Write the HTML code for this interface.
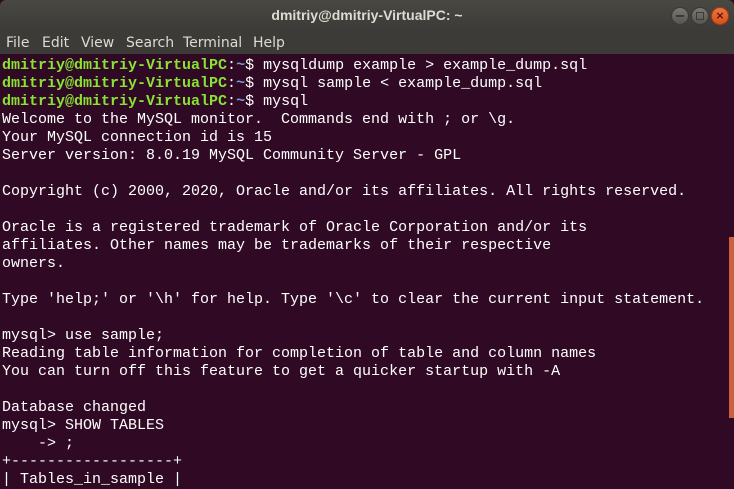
<!DOCTYPE html>
<html><head><style>
body{margin:0;width:734px;height:488px;overflow:hidden;background:#300a24;}
.title{position:absolute;left:0;top:0;width:734px;height:30px;background:linear-gradient(#4a4843,#3c3b37);border-radius:6px 6px 0 0;color:#dfdbd2;font:bold 14px "Liberation Sans",sans-serif;text-align:center;line-height:30px;}
.menu{position:absolute;left:0;top:30px;width:734px;height:24px;background:#3c3b37;color:#dfdbd2;font:14px "DejaVu Sans","Liberation Sans",sans-serif;line-height:27px;}
.menu span{position:absolute;top:0}
.term{position:absolute;left:0;top:54px;width:734px;height:434px;background:#300a24;}
pre{margin:0;position:absolute;left:2px;top:3px;font:15px "Liberation Mono",monospace;line-height:18px;color:#fff;}
.g{color:#8ae234;font-weight:bold}.b{color:#729fcf;font-weight:bold}
.btn{position:absolute;top:7px;width:16px;height:16px;border-radius:50%;background:linear-gradient(#7a7873,#56554f);border:1px solid #3a3935;}
.sb{position:absolute;left:729px;width:5px;height:181px;background:#c8613c;}
</style></head><body>
<div class="title">dmitriy@dmitriy-VirtualPC: ~</div>
<div class="btn" style="left:671px"><div style="position:absolute;left:4px;top:7px;width:8px;height:2px;background:#3c3b37"></div></div>
<div class="btn" style="left:691px"><div style="position:absolute;left:4px;top:4px;width:6px;height:6px;border:1px solid #3c3b37"></div></div>
<div class="btn" style="left:711px;background:linear-gradient(#f0743f,#dc4e1c);border-color:#a33d14;color:#4a1a08;font:bold 11px 'DejaVu Sans',sans-serif;text-align:center;line-height:16px">×</div>
<div class="menu"><span style="left:6px">File</span><span style="left:42px">Edit</span><span style="left:81px">View</span><span style="left:126px">Search</span><span style="left:183px">Terminal</span><span style="left:253px">Help</span></div>
<div class="term"><pre><span class="g">dmitriy@dmitriy-VirtualPC</span>:<span class="b">~</span>$ mysqldump example &gt; example_dump.sql
<span class="g">dmitriy@dmitriy-VirtualPC</span>:<span class="b">~</span>$ mysql sample &lt; example_dump.sql
<span class="g">dmitriy@dmitriy-VirtualPC</span>:<span class="b">~</span>$ mysql
Welcome to the MySQL monitor.  Commands end with ; or \g.
Your MySQL connection id is 15
Server version: 8.0.19 MySQL Community Server - GPL

Copyright (c) 2000, 2020, Oracle and/or its affiliates. All rights reserved.

Oracle is a registered trademark of Oracle Corporation and/or its
affiliates. Other names may be trademarks of their respective
owners.

Type 'help;' or '\h' for help. Type '\c' to clear the current input statement.

mysql&gt; use sample;
Reading table information for completion of table and column names
You can turn off this feature to get a quicker startup with -A

Database changed
mysql&gt; SHOW TABLES
    -&gt; ;
+------------------+
| Tables_in_sample |
</pre><div class="sb" style="top:183px"></div></div>
</body></html>
